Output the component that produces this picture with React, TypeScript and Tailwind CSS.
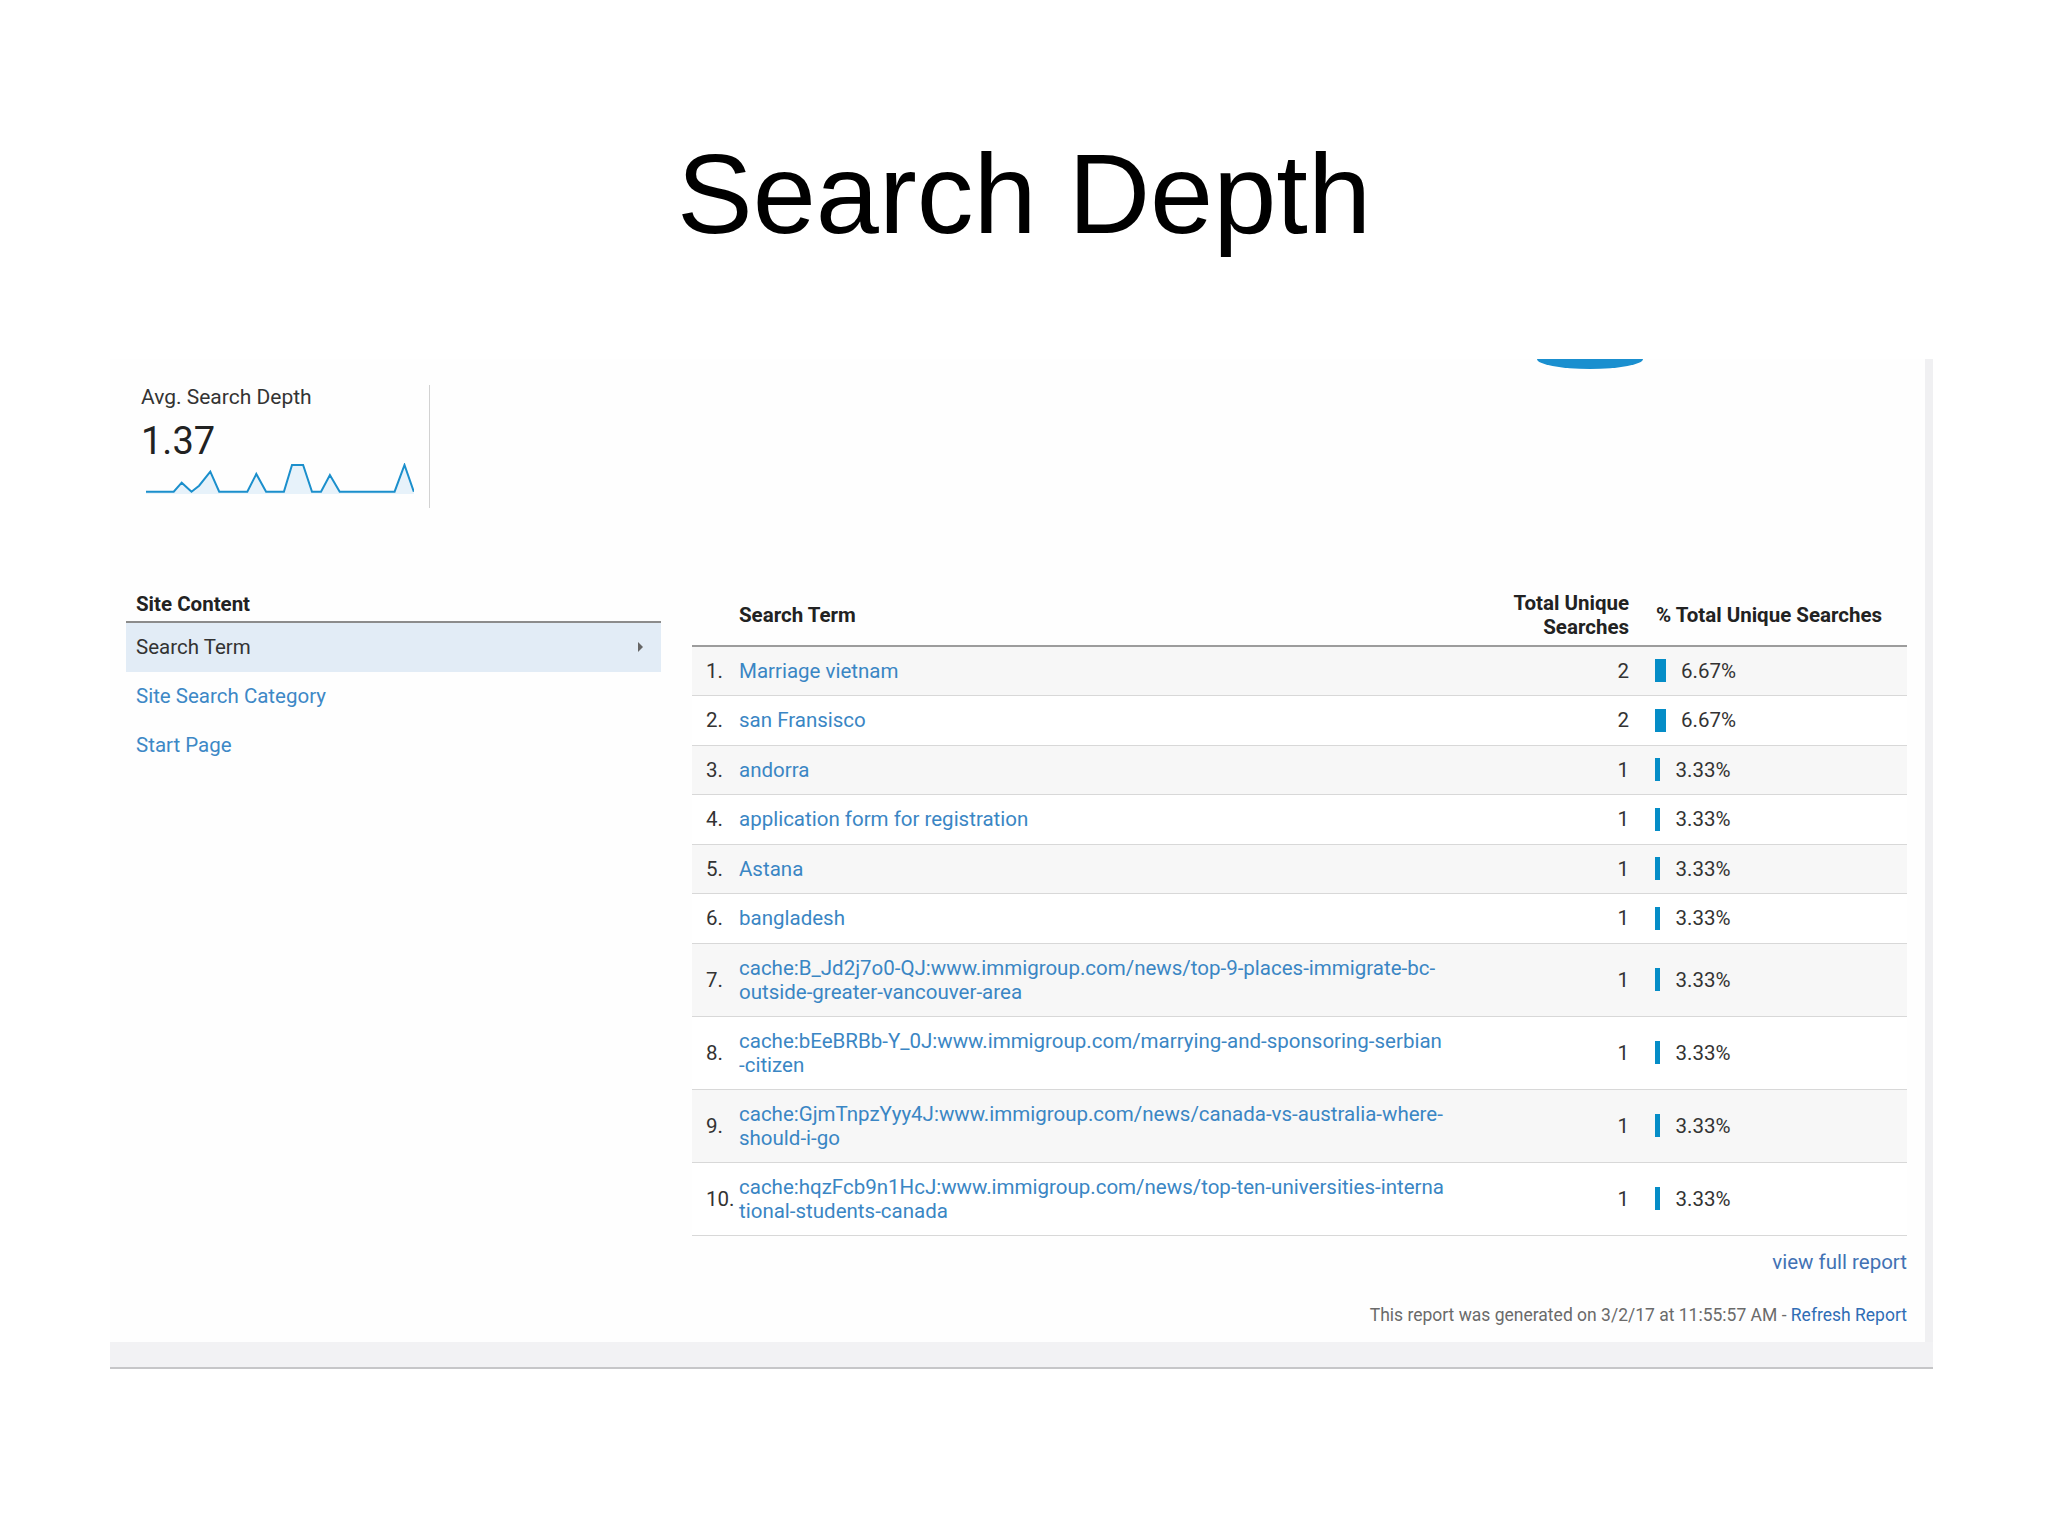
import React from "react";

type Row = {
  term: string[];
  count: number;
  pct: number;
};

const rows: Row[] = [
  { term: ["Marriage vietnam"], count: 2, pct: 6.67 },
  { term: ["san Fransisco"], count: 2, pct: 6.67 },
  { term: ["andorra"], count: 1, pct: 3.33 },
  { term: ["application form for registration"], count: 1, pct: 3.33 },
  { term: ["Astana"], count: 1, pct: 3.33 },
  { term: ["bangladesh"], count: 1, pct: 3.33 },
  {
    term: [
      "cache:B_Jd2j7o0-QJ:www.immigroup.com/news/top-9-places-immigrate-bc-",
      "outside-greater-vancouver-area",
    ],
    count: 1,
    pct: 3.33,
  },
  {
    term: [
      "cache:bEeBRBb-Y_0J:www.immigroup.com/marrying-and-sponsoring-serbian",
      "-citizen",
    ],
    count: 1,
    pct: 3.33,
  },
  {
    term: [
      "cache:GjmTnpzYyy4J:www.immigroup.com/news/canada-vs-australia-where-",
      "should-i-go",
    ],
    count: 1,
    pct: 3.33,
  },
  {
    term: [
      "cache:hqzFcb9n1HcJ:www.immigroup.com/news/top-ten-universities-interna",
      "tional-students-canada",
    ],
    count: 1,
    pct: 3.33,
  },
];

const spark =
  "0,28.7 27.7,28.7 35.7,19.7 45.5,28.7 53.1,22.7 64.3,8.7 73.2,28.7 101.3,28.7 110.3,11 120.1,28.7 137.9,28.7 146,2 157.1,2 166,28.7 175,28.7 183.9,12 193.7,28.7 248.6,28.7 258.5,2 267.8,28.7";

function Sparkline() {
  return (
    <svg width="268" height="31" viewBox="0 0 268 31" className="ml-[5px] mt-[2px] block">
      <polygon points={`${spark} 267.8,31 0,31`} fill="#e7f2fa" />
      <polyline points={spark} fill="none" stroke="#1b8fcc" strokeWidth="2" strokeLinejoin="miter" />
    </svg>
  );
}

function Scorecard() {
  return (
    <div className="h-[123px] w-[320px] border-r border-[#d2d2d2] pl-[31px]">
      <div className="text-[21px] leading-6 text-[#333]">Avg. Search Depth</div>
      <div className="mt-[12px] text-[38px] leading-10 text-[#222]">1.37</div>
      <Sparkline />
    </div>
  );
}

function SideNav() {
  return (
    <div className="ml-[16px] w-[535px] pt-[5px] text-[20.5px]">
      <div className="h-[31px] border-b-2 border-[#8c8c8c] pl-[10px] font-bold leading-6 text-[#222]">
        Site Content
      </div>
      <div className="flex h-[49px] items-center justify-between bg-[#e2ecf6] pl-[10px] pr-[18px] text-[#333]">
        <span>Search Term</span>
        <span className="h-0 w-0 border-y-[5px] border-l-[5px] border-y-transparent border-l-[#666]" />
      </div>
      <div className="flex h-[49px] items-center pl-[10px] text-[#3d88c6]">Site Search Category</div>
      <div className="flex h-[49px] items-center pl-[10px] text-[#3d88c6]">Start Page</div>
    </div>
  );
}

function Table() {
  return (
    <div className="ml-[31px] w-[1215px] text-[20.5px]">
      <div className="grid grid-cols-[47px_731px_185px_252px] border-b-2 border-[#9c9c9c] pb-[6px] pt-[4px] font-bold leading-6 text-[#222]">
        <div />
        <div className="flex h-[48px] items-center">Search Term</div>
        <div className="flex h-[48px] items-center justify-end pr-[26px] text-right">
          Total Unique
          <br />
          Searches
        </div>
        <div className="flex h-[48px] items-center pl-px">% Total Unique Searches</div>
      </div>
      {rows.map((r, i) => (
        <div
          key={i}
          className={`grid grid-cols-[47px_731px_185px_252px] items-center border-b border-[#d8d8d8] leading-6 ${
            r.term.length > 1 ? "py-[12px]" : "h-[49.5px]"
          } ${i % 2 === 0 ? "bg-[#f7f7f7]" : "bg-white"}`}
        >
          <div className="pl-[14px] text-[#333]">{i + 1}.</div>
          <div className="text-[#3a86c4]">
            {r.term.map((t, j) => (
              <div key={j}>{t}</div>
            ))}
          </div>
          <div className="pr-[26px] text-right text-[#333]">{r.count}</div>
          <div className="flex items-center gap-[15px] text-[#333]">
            <span className="h-[23px] bg-[#058dc7]" style={{ width: `${r.pct * 1.65}px` }} />
            <span>{r.pct.toFixed(2)}%</span>
          </div>
        </div>
      ))}
      <div className="mt-[14px] text-right text-[20.5px] leading-6 text-[#4272b4]">view full report</div>
      <div className="mt-[31px] text-right text-[17.5px] leading-5 text-[#6a6a6a]">
        This report was generated on 3/2/17 at 11:55:57 AM - <span className="text-[#2f6db5]">Refresh Report</span>
      </div>
    </div>
  );
}

export default function App() {
  return (
    <div className="min-h-[1535px] w-[2048px] bg-white font-['Roboto',sans-serif]">
      <h1 className="pt-[137px] text-center font-['Liberation_Sans',Arial,sans-serif] text-[113.5px] leading-none text-black">
        Search Depth
      </h1>

      <div className="ml-[110px] mt-[108px] w-[1823px]">
        <div className="relative border-r-[8px] border-[#f0f0f2] bg-[#fefefe] pb-[17px] pt-[26px]">
          {/* blue arc peeking from the chart above */}
          <div className="absolute left-[1427px] top-0 h-[10px] w-[106px] rounded-bl-[53px_10px] rounded-br-[53px_10px] bg-[#1a8fcf]" />

          <Scorecard />

          <div className="mt-[79px] flex">
            <SideNav />
            <Table />
          </div>
        </div>
        <div className="h-[27px] border-b-2 border-[#c6c6c8] bg-[#f2f2f4]" />
      </div>
    </div>
  );
}
